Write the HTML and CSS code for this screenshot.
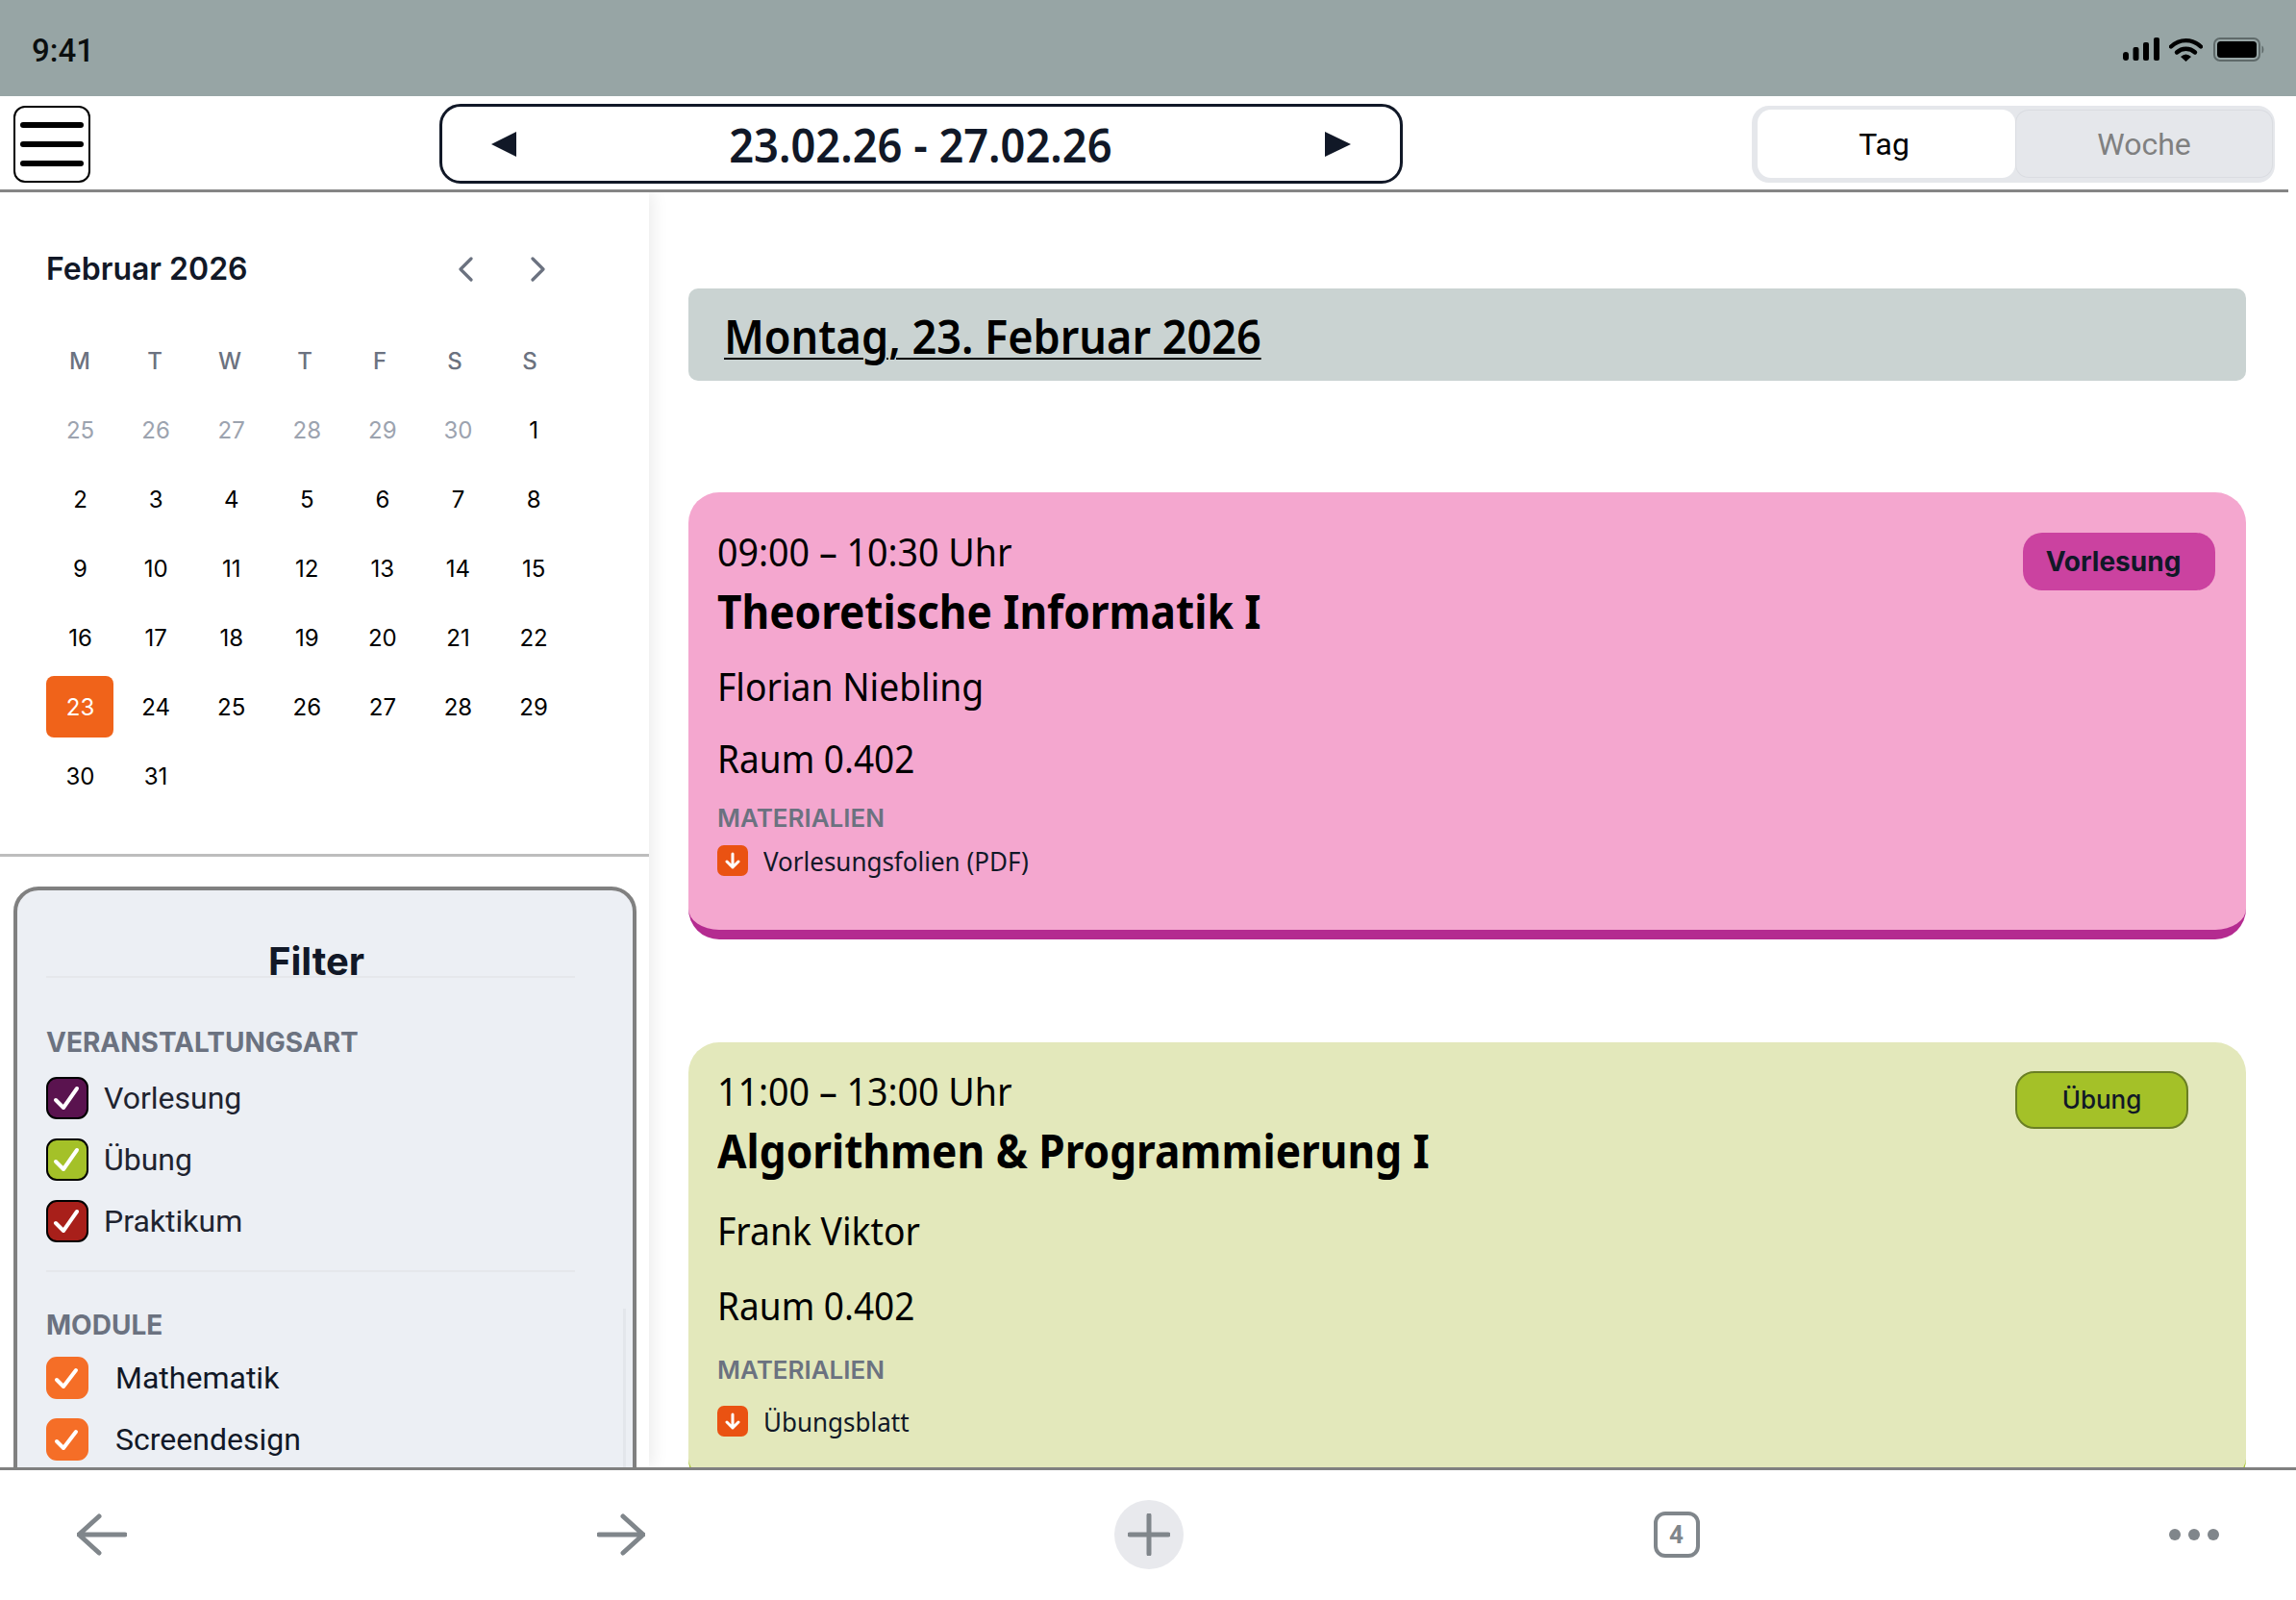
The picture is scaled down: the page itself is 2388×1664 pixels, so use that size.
FILE: index.html
```html
<!DOCTYPE html>
<html lang="de">
<head>
<meta charset="utf-8">
<title>Stundenplan</title>
<link rel="stylesheet" href="styles.css">
</head>
<body>
<div class="app">
  <header class="statusbar">
    <span class="clock">9:41</span>
    <div class="status-icons">
      <svg class="ic-signal" width="38" height="24" viewBox="0 0 38 24"><rect x="0" y="15" width="6" height="9" rx="3"/><rect x="10.5" y="10" width="6" height="14" rx="2"/><rect x="21" y="5" width="6" height="19" rx="2"/><rect x="32" y="0" width="6" height="24" rx="2"/></svg>
      <svg class="ic-wifi" width="35" height="25" viewBox="0 0 35 25"><path d="M2 9.5C11 1 24 1 33 9.5" fill="none" stroke="#000" stroke-width="4.4" stroke-linecap="round"/><path d="M8 15.5C13.5 10.5 21.5 10.5 27 15.5" fill="none" stroke="#000" stroke-width="4.4" stroke-linecap="round"/><path d="M12 20 Q17.5 15 23 20 L17.5 25Z"/></svg>
      <svg class="ic-battery" width="54" height="25" viewBox="0 0 54 25"><rect x="1" y="1" width="47" height="23" rx="6" fill="none" stroke="#5f6a6a" stroke-width="2"/><rect x="4" y="4" width="41" height="17" rx="3.5" fill="#000"/><path d="M50.5 8.5C53 9.5 53 15.5 50.5 16.5Z" fill="#5f6a6a"/></svg>
    </div>
  </header>

  <div class="topbar">
    <button class="menu-btn" type="button" aria-label="Menü"><span></span><span></span><span></span></button>
    <div class="week-nav">
      <svg width="26" height="26" viewBox="0 0 26 26"><path d="M26 0V26L0 13Z" fill="#111827"/></svg>
      <span class="week-label">23.02.26 - 27.02.26</span>
      <svg width="27" height="26" viewBox="0 0 27 26"><path d="M0 0V26L27 13Z" fill="#111827"/></svg>
    </div>
    <div class="segment">
      <button class="seg seg-on" type="button">Tag</button>
      <button class="seg seg-off" type="button">Woche</button>
    </div>
  </div>

  <div class="content">
    <aside class="sidebar">
      <section class="calendar">
        <div class="cal-head">
          <h2 class="cal-title">Februar 2026</h2>
          <div class="cal-arrows">
            <svg width="16" height="26" viewBox="0 0 16 26"><path d="M14 2L3 13L14 24" fill="none" stroke="#6b7280" stroke-width="3.2" stroke-linecap="round" stroke-linejoin="round"/></svg>
            <svg width="16" height="26" viewBox="0 0 16 26"><path d="M2 2L13 13L2 24" fill="none" stroke="#6b7280" stroke-width="3.2" stroke-linecap="round" stroke-linejoin="round"/></svg>
          </div>
        </div>
        <div class="cal-weekdays">
          <span class="wd">M</span><span class="wd">T</span><span class="wd">W</span><span class="wd">T</span><span class="wd">F</span><span class="wd">S</span><span class="wd">S</span>
        </div>
        <div class="cal-grid">
          <span class="d out">25</span><span class="d out">26</span><span class="d out">27</span><span class="d out">28</span><span class="d out">29</span><span class="d out">30</span><span class="d">1</span>
          <span class="d">2</span><span class="d">3</span><span class="d">4</span><span class="d">5</span><span class="d">6</span><span class="d">7</span><span class="d">8</span>
          <span class="d">9</span><span class="d">10</span><span class="d">11</span><span class="d">12</span><span class="d">13</span><span class="d">14</span><span class="d">15</span>
          <span class="d">16</span><span class="d">17</span><span class="d">18</span><span class="d">19</span><span class="d">20</span><span class="d">21</span><span class="d">22</span>
          <span class="d sel">23</span><span class="d">24</span><span class="d">25</span><span class="d">26</span><span class="d">27</span><span class="d">28</span><span class="d">29</span>
          <span class="d">30</span><span class="d">31</span>
        </div>
      </section>

      <section class="filter">
        <h2 class="filter-title">Filter</h2>
        <h3 class="filter-label first">VERANSTALTUNGSART</h3>
        <div class="check-list">
          <label class="check"><span class="box box-vl"><svg width="44" height="44" viewBox="0 0 44 44"><path d="M10 24L18 32L32 12"/></svg></span><span class="check-text">Vorlesung</span></label>
          <label class="check"><span class="box box-ub"><svg width="44" height="44" viewBox="0 0 44 44"><path d="M10 24L18 32L32 12"/></svg></span><span class="check-text">Übung</span></label>
          <label class="check"><span class="box box-pr"><svg width="44" height="44" viewBox="0 0 44 44"><path d="M10 24L18 32L32 12"/></svg></span><span class="check-text">Praktikum</span></label>
        </div>
        <hr class="filter-rule">
        <h3 class="filter-label">MODULE</h3>
        <div class="check-list module-list">
          <label class="check"><span class="box box-mod"><svg width="44" height="44" viewBox="0 0 44 44"><path d="M11 24L18 31L31 14"/></svg></span><span class="check-text mod">Mathematik</span></label>
          <label class="check"><span class="box box-mod"><svg width="44" height="44" viewBox="0 0 44 44"><path d="M11 24L18 31L31 14"/></svg></span><span class="check-text mod">Screendesign</span></label>
        </div>
        <div class="scroll-thumb"></div>
      </section>
    </aside>

    <main class="main">
      <h1 class="day-head"><span class="day-text">Montag, 23. Februar 2026</span></h1>

      <article class="card card-vl">
        <div class="card-body">
          <div class="time">09:00 – 10:30 Uhr</div>
          <h2 class="title">Theoretische Informatik I</h2>
          <div class="person">Florian Niebling</div>
          <div class="room">Raum 0.402</div>
          <div class="mat-label">MATERIALIEN</div>
          <div class="mat-item">
            <svg class="dl" width="32" height="32" viewBox="0 0 32 32"><rect width="32" height="32" rx="7" fill="#ea5212"/><path d="M16 9V23M10 17L16 23L22 17" fill="none" stroke="#fff" stroke-width="3" stroke-linecap="round" stroke-linejoin="round"/></svg>
            <span class="mat-text">Vorlesungsfolien (PDF)</span>
          </div>
        </div>
        <span class="badge badge-vl">Vorlesung</span>
      </article>

      <article class="card card-ub">
        <div class="card-body">
          <div class="time">11:00 – 13:00 Uhr</div>
          <h2 class="title">Algorithmen &amp; Programmierung I</h2>
          <div class="person">Frank Viktor</div>
          <div class="room">Raum 0.402</div>
          <div class="mat-label">MATERIALIEN</div>
          <div class="mat-item">
            <svg class="dl" width="32" height="32" viewBox="0 0 32 32"><rect width="32" height="32" rx="7" fill="#ea5212"/><path d="M16 9V23M10 17L16 23L22 17" fill="none" stroke="#fff" stroke-width="3" stroke-linecap="round" stroke-linejoin="round"/></svg>
            <span class="mat-text">Übungsblatt</span>
          </div>
        </div>
        <span class="badge badge-ub">Übung</span>
      </article>
    </main>
  </div>

  <nav class="bottombar">
    <svg width="52" height="44" viewBox="0 0 52 44"><path d="M23 3L2 22L23 41M2 22H50" fill="none" stroke="#80868b" stroke-width="5" stroke-linecap="round" stroke-linejoin="round"/></svg>
    <svg width="50" height="44" viewBox="0 0 50 44"><path d="M27 3L48 22L27 41M48 22H2" fill="none" stroke="#80868b" stroke-width="5" stroke-linecap="round" stroke-linejoin="round"/></svg>
    <span class="plus"><svg width="44" height="44" viewBox="0 0 44 44"><path d="M22 2V42M2 22H42" fill="none" stroke="#80868b" stroke-width="5" stroke-linecap="round"/></svg></span>
    <span class="tabs">4</span>
    <span class="dots"><i></i><i></i><i></i></span>
  </nav>
</div>
</body>
</html>
```
FILE: styles.css
```css
* { box-sizing: border-box; }
html, body { margin: 0; padding: 0; background: #fff; }
h1, h2, h3, hr { margin: 0; padding: 0; font: inherit; border: 0; }
button { font: inherit; border: 0; padding: 0; background: none; }

.app {
  width: 2388px;
  height: 1664px;
  display: flex;
  flex-direction: column;
  overflow: hidden;
  font-family: "Inter", "Liberation Sans", sans-serif;
  color: #000;
}

/* status bar */
.statusbar {
  flex: 0 0 100px;
  background: #97a5a5;
  display: flex;
  align-items: flex-start;
  justify-content: space-between;
  padding: 37px 32px 0 33px;
}
.clock { font: 500 33px/32px "Roboto", "Liberation Sans", sans-serif; color: #0b0f0f; }
.status-icons { display: flex; align-items: flex-start; gap: 10px; margin-top: 2px; }
.ic-battery { margin-left: 1px; }

/* top bar */
.topbar {
  flex: 0 0 100px;
  width: 2380px;
  display: flex;
  align-items: flex-start;
  padding: 8px 14px 0 14px;
  border-bottom: 3px solid #858585;
}
.menu-btn {
  width: 80px;
  height: 80px;
  margin-top: 2px;
  border: 2px solid #000;
  border-radius: 12px;
  display: flex;
  flex-direction: column;
  align-items: center;
  gap: 14px;
  padding-top: 15px;
}
.menu-btn span { display: block; width: 66px; height: 6px; background: #000; border-radius: 3px; }
.week-nav {
  width: 1002px;
  height: 83px;
  margin-left: 363px;
  border: 3px solid #111827;
  border-radius: 22px;
  display: flex;
  align-items: center;
  justify-content: space-between;
  padding: 0 51px;
}
.week-label { font: 600 48px/64px "Noto Sans", sans-serif; color: #111827; transform: translateY(1px) scaleX(.942); }
.segment {
  margin-left: auto;
  margin-top: 2px;
  width: 544px;
  height: 80px;
  background: #e5e7eb;
  border-radius: 18px;
  padding: 4px 2px 5px 6px;
  display: flex;
}
.seg { flex: 1 1 0; font: 400 32px/72px "Roboto", sans-serif; border-radius: 14px; text-align: center; }
.seg-on { background: #fff; color: #000; text-indent: -5px; }
.seg-off { color: #808080; box-shadow: inset 0 0 0 1px #dadce1; }

/* layout */
.content { flex: 1 1 auto; display: flex; min-height: 0; overflow: hidden; }
.sidebar {
  flex: 0 0 675px;
  position: relative;
  z-index: 1;
  background: #fff;
  box-shadow: 4px 0 16px rgba(0,0,0,.08);
  height: 100%;
  overflow: hidden;
}

/* calendar */
.calendar { padding: 48px 0 49px 48px; border-bottom: 3px solid #bdbdbd; }
.cal-head { height: 64px; display: flex; align-items: center; margin-bottom: 31px; }
.cal-title { font: 600 32px/64px "Inter", sans-serif; color: #111827; }
.cal-arrows { margin-left: 218px; display: flex; gap: 60px; }
.cal-weekdays {
  display: grid;
  grid-template-columns: repeat(7, 70px);
  grid-auto-rows: 64px;
  column-gap: 8px;
  margin-bottom: 8px;
}
.cal-grid {
  display: grid;
  grid-template-columns: repeat(7, 70px);
  grid-auto-rows: 64px;
  column-gap: 8.6px;
  row-gap: 8px;
}
.wd, .d { display: flex; align-items: center; justify-content: center; font-size: 24px; }
.wd { color: #6b7280; font-weight: 500; }
.d { color: #000; padding-left: 1px; }
.out { color: #9ca3af; }
.sel { background: #f0631a; color: #fff; border-radius: 8px; }

/* filter */
.filter {
  position: relative;
  width: 648px;
  margin: 31px 0 0 14px;
  padding: 51px 0 60px 30px;
  background: #eceff4;
  border: 4px solid #808080;
  border-radius: 26px;
}
.filter-title {
  width: 550px;
  height: 40px;
  padding-left: 12px;
  font: 700 40px/46px "Inter", sans-serif;
  color: #111827;
  text-align: center;
  border-bottom: 2px solid #e5e7eb;
}
.filter-label { font: 650 28px/32px "Inter", sans-serif; color: #6b7280; margin-top: 39px; }
.filter-label.first { margin-top: 51px; }
.check-list { display: flex; flex-direction: column; gap: 20px; margin-top: 20px; }
.module-list { margin-top: 17px; }
.check { display: flex; align-items: center; height: 44px; }
.box { flex: 0 0 44px; width: 44px; height: 44px; border-radius: 11px; border: 2px solid #000; position: relative; }
.box svg { position: absolute; left: -2px; top: -2px; fill: none; stroke: #fff; stroke-width: 4; stroke-linecap: round; stroke-linejoin: round; }
.box-vl { background: #5a134f; }
.box-ub { background: #a4c128; }
.box-pr { background: #a81f1a; }
.box-mod { background: #f56e27; border-color: #f56e27; }
.check-text { margin-left: 16px; font: 400 32px/44px "Roboto", sans-serif; color: #1f2430; }
.check-text.mod { margin-left: 28px; color: #111827; }
.filter-rule { width: 550px; height: 2px; background: #e5e7eb; margin-top: 29px; }
.scroll-thumb { position: absolute; right: 7px; top: 435px; bottom: 0; width: 3px; background: #e3e6eb; }

/* main */
.main { flex: 1 1 auto; min-width: 0; padding: 100px 52px 0 41px; background: #fff; font-family: "Noto Sans", sans-serif; }
.day-head {
  height: 96px;
  margin-bottom: 116px;
  padding: 4px 0 0 37px;
  background: #cad3d2;
  border-radius: 10px;
  font: 600 48px/68px "Noto Sans", sans-serif;
  color: #000;
  display: flex;
  align-items: center;
}
.day-text {
  display: inline-block;
  transform: scaleX(.938);
  transform-origin: left center;
  text-decoration: underline;
  text-decoration-thickness: 2px;
  text-underline-offset: 4px;
}

.card {
  display: flex;
  justify-content: space-between;
  align-items: flex-start;
  height: 465px;
  border-radius: 32px;
  padding-left: 30px;
}
.card-body { flex: 1 1 auto; min-width: 0; }
.card-vl { background: #f4a7cf; border-bottom: 10px solid #b42b90; margin-bottom: 107px; padding-top: 40px; padding-right: 32px; }
.card-ub { background: #e3e8bb; border-bottom: 10px solid #a4c128; padding-top: 29px; padding-right: 60px; }

.time, .title, .person, .room { transform-origin: left center; }
.time { font: 400 40px/44px "Noto Sans", sans-serif; transform: scaleX(.94); }
.title { font: 700 48px/56px "Noto Sans", sans-serif; transform: scaleX(.92); margin-top: 12px; }
.person { font: 400 40px/48px "Noto Sans", sans-serif; transform: scaleX(.932); margin-top: 26px; }
.room { font: 400 40px/48px "Noto Sans", sans-serif; transform: scaleX(.925); margin-top: 27px; }
.mat-label { font: 600 26px/32px "Inter", sans-serif; color: #6b7280; margin-top: 22px; }
.mat-item { display: flex; align-items: center; gap: 16px; margin-top: 12px; font: 400 28px/32px "Noto Sans", sans-serif; color: #111827; }
.mat-text { display: inline-block; transform: scaleX(.928); transform-origin: left center; }
.card-ub .person { margin-top: 31px; }
.card-ub .room { margin-top: 30px; }
.card-ub .mat-label { margin-top: 27px; }
.card-ub .mat-item { margin-top: 21px; }

.badge { display: block; flex: 0 0 auto; height: 60px; border-radius: 20px; font-family: "Inter", sans-serif; color: #111827; text-align: center; }
.badge-vl { width: 200px; margin-top: 2px; padding-right: 12px; background: #cb42a0; font-size: 28px; font-weight: 700; line-height: 60px; }
.badge-ub { width: 180px; margin-top: 1px; background: #a4c128; border: 2px solid #6a7f24; font-size: 26px; font-weight: 500; line-height: 56px; }

/* bottom bar */
.bottombar {
  flex: 0 0 138px;
  border-top: 3px solid #808080;
  background: #fff;
  position: relative;
  z-index: 2;
  display: flex;
  align-items: center;
  justify-content: space-between;
  padding: 0 80px 2px;
}
.plus { width: 72px; height: 72px; border-radius: 50%; background: #e8e9ed; display: flex; align-items: center; justify-content: center; }
.tabs { width: 48px; height: 48px; border: 4px solid #80868b; border-radius: 12px; font: 700 26px/40px "Roboto", sans-serif; color: #80868b; text-align: center; }
.dots { width: 52px; display: flex; justify-content: space-between; }
.dots i { width: 12px; height: 12px; border-radius: 50%; background: #80868b; }
```
